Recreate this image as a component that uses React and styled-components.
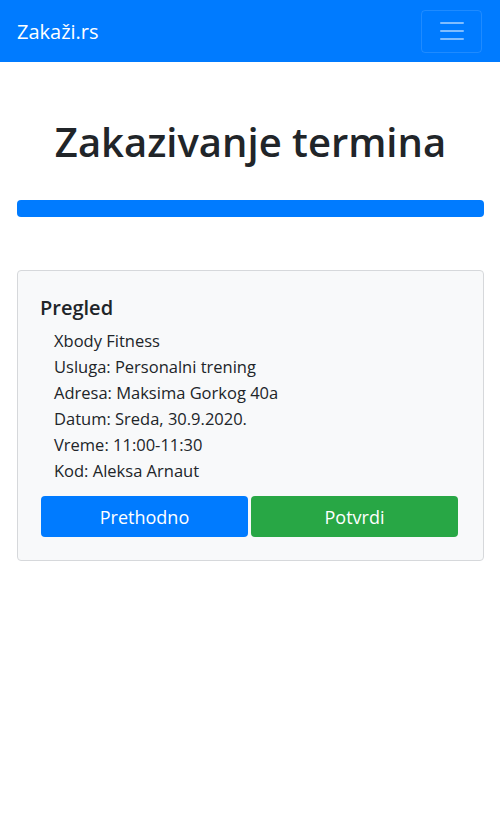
import React from 'react'
import styled, { createGlobalStyle } from 'styled-components'

const GlobalStyle = createGlobalStyle`
  * { box-sizing: border-box; }
  body {
    margin: 0;
    background: #fff;
    color: #212529;
    font-family: 'Open Sans', 'Noto Sans', Arial, sans-serif;
  }
`

const Navbar = styled.nav`
  height: 62px;
  background-color: #007bff;
  display: flex;
  align-items: center;
  justify-content: space-between;
  padding: 0 18px 0 17px;
`

const Brand = styled.a`
  color: #fff;
  font-size: 20px;
  text-decoration: none;
`

const Toggler = styled.button`
  width: 61px;
  height: 43px;
  border: 1px solid rgba(255, 255, 255, 0.12);
  border-radius: 4px;
  background: transparent;
  display: flex;
  align-items: center;
  justify-content: center;
  padding: 0;
`

const Main = styled.main`
  padding: 0 16px 0 17px;
`

const Title = styled.h1`
  margin: 56px 0 34px;
  text-align: center;
  font-size: 40px;
  font-weight: 600;
  line-height: 1.2;
`

const Progress = styled.div`
  height: 17px;
  border-radius: 4px;
  background: #e9ecef;
  overflow: hidden;
`

const ProgressBar = styled.div`
  height: 100%;
  background: #007bff;
`

const Card = styled.section`
  margin-top: 53px;
  background: #f8f9fa;
  border: 1px solid #d6d8db;
  border-radius: 4px;
  padding: 25px 24px 23px 22px;
`

const CardTitle = styled.h5`
  margin: 0 0 8px;
  font-size: 20px;
  font-weight: 600;
  line-height: 1.2;
`

const InfoList = styled.ul`
  list-style: none;
  margin: 0 0 12px;
  padding: 0 0 0 14px;
`

const InfoItem = styled.li`
  font-size: 16.5px;
  line-height: 26px;
`

const ButtonRow = styled.div`
  display: flex;
  gap: 3px;
  padding-left: 1px;
`

const Button = styled.button`
  width: 207px;
  height: 41px;
  border: none;
  border-radius: 4px;
  color: #fff;
  font-family: inherit;
  font-size: 18px;
  background: ${({ variant }) => (variant === 'success' ? '#28a745' : '#007bff')};
`

const info = [
  'Xbody Fitness',
  'Usluga: Personalni trening',
  'Adresa: Maksima Gorkog 40a',
  'Datum: Sreda, 30.9.2020.',
  'Vreme: 11:00-11:30',
  'Kod: Aleksa Arnaut'
]

const App = () => (
  <>
    <GlobalStyle />
    <Navbar>
      <Brand href="#">Zakaži.rs</Brand>
      <Toggler aria-label="Toggle navigation">
        <svg width="30" height="30" viewBox="0 0 30 30">
          <path
            stroke="rgba(255,255,255,0.5)"
            strokeLinecap="round"
            strokeWidth="2"
            d="M4 7h22M4 15h22M4 23h22"
          />
        </svg>
      </Toggler>
    </Navbar>
    <Main>
      <Title>Zakazivanje termina</Title>
      <Progress>
        <ProgressBar style={{ width: '100%' }} />
      </Progress>
      <Card>
        <CardTitle>Pregled</CardTitle>
        <InfoList>
          {info.map((line) => (
            <InfoItem key={line}>{line}</InfoItem>
          ))}
        </InfoList>
        <ButtonRow>
          <Button>Prethodno</Button>
          <Button variant="success">Potvrdi</Button>
        </ButtonRow>
      </Card>
    </Main>
  </>
)

export default App
